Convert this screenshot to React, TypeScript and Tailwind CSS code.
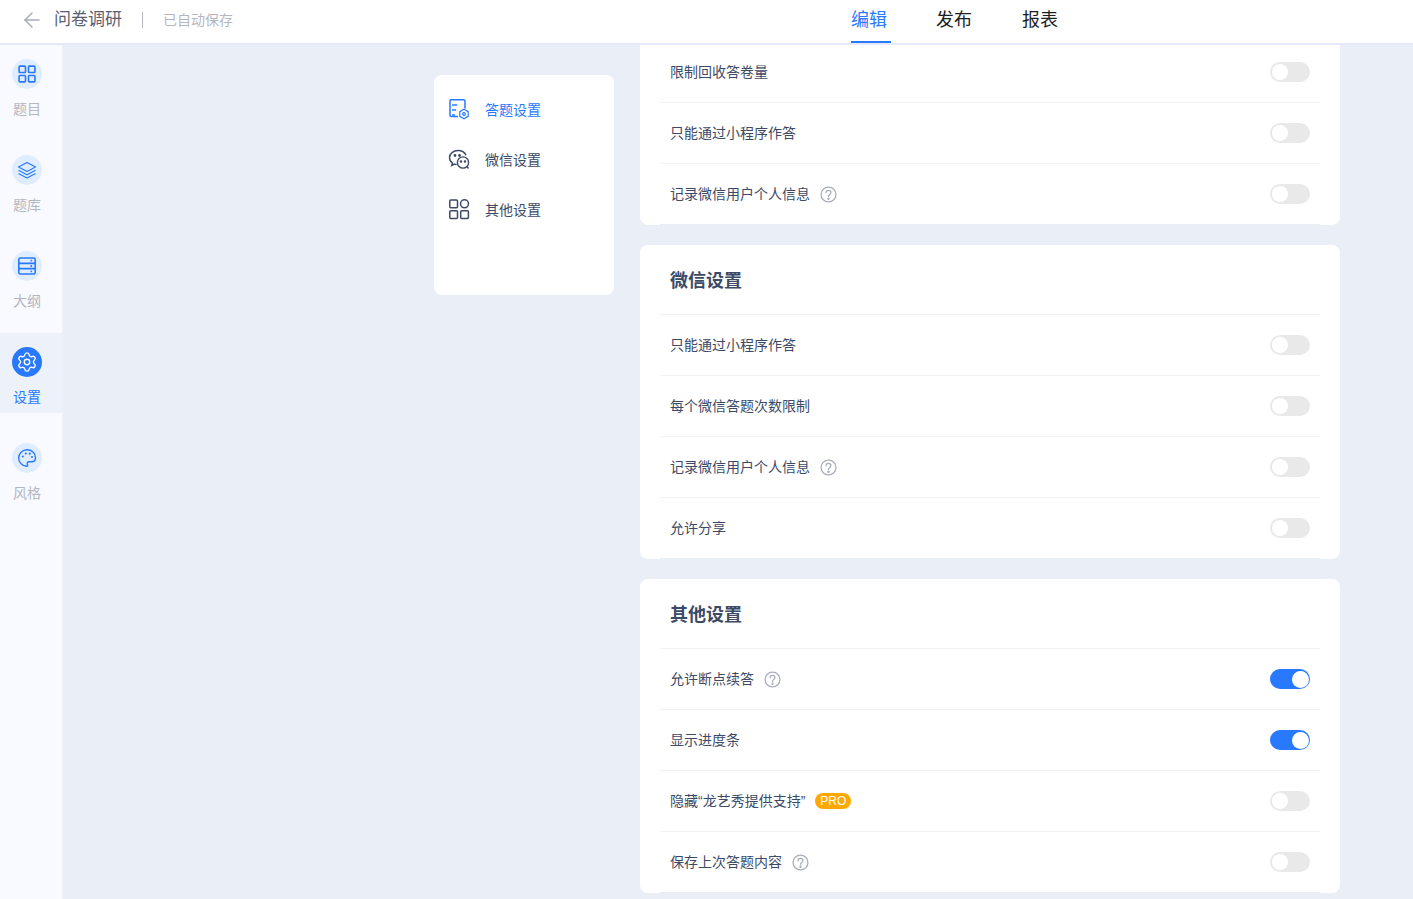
import { ArrowLeft, Settings } from 'lucide-react';
import type { ReactNode } from 'react';

function GridIcon() {
  return (
    <svg width="20" height="20" viewBox="0 0 20 20" fill="none" stroke="currentColor" strokeWidth="1.6">
      <rect x="2.100" y="2.100" width="6.400" height="6.400" rx=".8" />
      <rect x="11.500" y="2.100" width="6.400" height="6.400" rx=".8" />
      <rect x="2.100" y="11.500" width="6.400" height="6.400" rx=".8" />
      <rect x="11.500" y="11.500" width="6.400" height="6.400" rx=".8" />
    </svg>
  );
}

function LayersIcon() {
  return (
    <svg width="20" height="20" viewBox="0 0 20 20" fill="none" stroke="currentColor" strokeWidth="1.200" strokeLinejoin="round">
      <path d="M10 2.500l8.500 4.500-8.500 4.500-8.500-4.500z" />
      <path d="M1.500 10.300l8.500 4.500 8.500-4.500" />
      <path d="M1.500 13.500l8.500 4.500 8.500-4.500" />
    </svg>
  );
}

function OutlineIcon() {
  return (
    <svg width="20" height="20" viewBox="0 0 20 20" fill="none" stroke="currentColor" strokeWidth="1.600">
      <rect x="1.800" y="2" width="16.400" height="16" rx="1.500" />
      <path d="M2 7.400h16M2 12.600h16" />
      <path d="M13.500 4.700h2.500M13.500 10h2.500M13.500 15.300h2.500" strokeWidth="1.800" strokeDasharray="1.400 1" />
    </svg>
  );
}

function PaletteIcon() {
  return (
    <svg width="20" height="20" viewBox="0 0 20 20" fill="none" stroke="currentColor" strokeWidth="1.400">
      <path d="M10 1.800C5.300 1.800 1.700 5.500 1.700 10c0 4.500 3.600 8.300 8 8.300 1 0 1.100-.8.800-1.500-.7-1.500-.2-3 1.700-3h2.500c2 0 3.800-1.300 3.800-4C18.500 5 14.700 1.800 10 1.800z" />
      <circle cx="5.800" cy="8.500" r="1.100" fill="currentColor" stroke="none" />
      <circle cx="8.800" cy="5.500" r="1.100" fill="currentColor" stroke="none" />
      <circle cx="12.800" cy="5.700" r="1.100" fill="currentColor" stroke="none" />
      <circle cx="15" cy="9" r="1.100" fill="currentColor" stroke="none" />
    </svg>
  );
}

function HelpIcon() {
  return (
    <svg width="17" height="17" viewBox="0 0 18 18" fill="none" stroke="#a9adba" strokeWidth="1.300">
      <circle cx="9" cy="9" r="7.900" />
      <path d="M6.400 7.100c0-1.500 1.200-2.500 2.600-2.500s2.600 1 2.600 2.400c0 2-2.600 2-2.600 4.100" strokeLinecap="round" />
      <circle cx="9" cy="13.500" r=".6" fill="#a9adba" />
    </svg>
  );
}

function AnswerIcon() {
  return (
    <svg width="22" height="22" viewBox="0 0 22 22" fill="none" stroke="#2979ff" strokeWidth="1.500">
      <path d="M10 17.500H3A1.300 1.300 0 0 1 2 16.200V1.800A1.300 1.300 0 0 1 3 .8h12.700A1.300 1.300 0 0 1 17 1.800V9.500" />
      <path d="M4 6h5M4 11h4M4 16h3" />
      <path d="M16 10.300l4.200 2.300v4.800L16 19.700l-4.200-2.300v-4.800z" strokeWidth="1.200" />
      <circle cx="16" cy="15" r="1.300" strokeWidth="1.200" />
    </svg>
  );
}

function WechatIcon() {
  return (
    <svg width="22" height="22" viewBox="0 0 22 22" fill="none" stroke="#3d4a66" strokeWidth="1.400">
      <path d="M10 1.500C5.300 1.500 1.500 4.700 1.500 8.700c0 2.200 1.100 4.100 3 5.400l-.8 2.400 3-1.400c.7.200 1.300.3 2 .4" />
      <path d="M10 1.500c3.600 0 6.700 1.900 8 4.700" />
      <circle cx="15" cy="13.500" r="5.600" />
      <path d="M19 17.500l1.500 2" />
      <circle cx="7" cy="6.500" r=".7" fill="#3d4a66" />
      <circle cx="11.500" cy="6.500" r=".7" fill="#3d4a66" />
      <circle cx="13" cy="12.500" r=".6" fill="#3d4a66" />
      <circle cx="17" cy="12.500" r=".6" fill="#3d4a66" />
    </svg>
  );
}

function OtherIcon() {
  return (
    <svg width="22" height="22" viewBox="0 0 22 22" fill="none" stroke="#3d4a66" strokeWidth="1.500">
      <rect x="1.800" y="1" width="7.700" height="7.700" rx="1" />
      <circle cx="16.500" cy="4.800" r="4" />
      <rect x="1.800" y="11.800" width="7.700" height="7.700" rx="1" />
      <rect x="12.700" y="11.800" width="7.700" height="7.700" rx="1" />
    </svg>
  );
}

const navItems: { label: string; icon: ReactNode; active?: boolean }[] = [
  { label: '题目', icon: <GridIcon /> },
  { label: '题库', icon: <LayersIcon /> },
  { label: '大纲', icon: <OutlineIcon /> },
  { label: '设置', icon: <Settings size={22} strokeWidth={1.500} />, active: true },
  { label: '风格', icon: <PaletteIcon /> },
];

function Toggle({ on }: { on?: boolean }) {
  return on ? (
    <div className="flex h-5 w-10 items-center justify-end rounded-full bg-[#2979ff] px-px">
      <div className="h-[17px] w-[17px] rounded-full bg-white" />
    </div>
  ) : (
    <div className="flex h-5 w-10 items-center rounded-full bg-[#e9e9e9] px-[2px]">
      <div className="h-4 w-4 rounded-full bg-white" />
    </div>
  );
}

function Row({ label, help, pro, on, last }: { label: string; help?: boolean; pro?: boolean; on?: boolean; last?: boolean }) {
  return (
    <div className={`flex h-[61px] items-center justify-between border-b px-[10px] ${last ? 'border-[#eaeef7]' : 'border-[#f0f1f5]'}`}>
      <div className="flex items-center text-sm text-[#3d4a66]">
        <span>{label}</span>
        {help && (
          <span className="ml-[10px] flex">
            <HelpIcon />
          </span>
        )}
        {pro && (
          <span className="ml-[10px] flex h-4 w-9 items-center justify-center rounded-full bg-[#ffa800] text-xs text-white">
            PRO
          </span>
        )}
      </div>
      <Toggle on={on} />
    </div>
  );
}

function Title({ children }: { children: ReactNode }) {
  return (
    <div className="flex h-[70px] items-center border-b border-[#f0f1f5] px-[10px] pt-[2px] text-lg font-bold text-[#3d4a66]">
      {children}
    </div>
  );
}

export default function App() {
  return (
    <div className="flex h-screen flex-col overflow-hidden bg-[#eaeef7] font-['Liberation_Sans','Noto_Sans_CJK_SC',sans-serif]">
      <header className="flex h-[45px] shrink-0 items-center border-b-2 border-[#e6e9fb] bg-white">
        <div className="flex w-[851px] shrink-0 items-center pb-1 pl-[20px]">
          <ArrowLeft size={24} strokeWidth={1.500} className="text-[#a9adb8]" />
          <span className="ml-[10px] text-[17px] text-[#5b6070]">问卷调研</span>
          <div className="ml-[20px] h-4 w-px bg-[#b5b8c0]" />
          <span className="ml-[20px] mt-px text-sm text-[#b4b7bf]">已自动保存</span>
        </div>
        <nav className="flex h-[43px] text-lg text-[#1c1f26]">
          <div className="flex h-[43px] w-10 items-center border-b-2 border-[#2979ff] pb-px text-[#2979ff]">编辑</div>
          <div className="ml-[45px] flex h-[43px] w-10 items-center pb-[3px]">发布</div>
          <div className="ml-[46px] flex h-[43px] w-10 items-center pb-[3px]">报表</div>
        </nav>
      </header>

      <div className="flex min-h-0 flex-1">
        <aside className="flex w-[63px] shrink-0 flex-col gap-4 border-r border-[#eef1f8] bg-[#f8faff]">
          {navItems.map((item) => (
            <div
              key={item.label}
              className={`flex h-20 flex-col items-center pt-[14px] pr-2 ${item.active ? 'bg-[#ecf1fa]' : ''}`}
            >
              <div
                className={`flex h-[30px] w-[30px] items-center justify-center rounded-full ${
                  item.active ? 'bg-[#2979ff] text-white' : 'bg-[#e0edff] text-[#2979ff]'
                }`}
              >
                {item.icon}
              </div>
              <span className={`mt-[10px] text-sm leading-[20px] ${item.active ? 'text-[#2979ff]' : 'text-[#b4b7bf]'}`}>
                {item.label}
              </span>
            </div>
          ))}
        </aside>

        <main className="flex min-w-0 flex-1 items-start gap-[26px] overflow-hidden pl-[371px]">
          <div className="mt-[30px] h-[220px] w-[180px] shrink-0 rounded-lg bg-white px-[14px] pt-[10px]">
            <div className="flex h-[50px] items-center gap-[15px] text-sm text-[#2979ff]">
              <AnswerIcon />
              <span>答题设置</span>
            </div>
            <div className="flex h-[50px] items-center gap-[15px] text-sm text-[#3d4a66]">
              <WechatIcon />
              <span>微信设置</span>
            </div>
            <div className="flex h-[50px] items-center gap-[15px] text-sm text-[#3d4a66]">
              <OtherIcon />
              <span>其他设置</span>
            </div>
          </div>

          <div className="-mt-[3px] flex w-[700px] shrink-0 flex-col gap-5">
            <section className="rounded-b-lg bg-white px-5">
              <Row label="限制回收答卷量" />
              <Row label="只能通过小程序作答" />
              <Row label="记录微信用户个人信息" help last />
            </section>
            <section className="rounded-lg bg-white px-5">
              <Title>微信设置</Title>
              <Row label="只能通过小程序作答" />
              <Row label="每个微信答题次数限制" />
              <Row label="记录微信用户个人信息" help />
              <Row label="允许分享" last />
            </section>
            <section className="rounded-lg bg-white px-5">
              <Title>其他设置</Title>
              <Row label="允许断点续答" help on />
              <Row label="显示进度条" on />
              <Row label="隐藏“龙艺秀提供支持”" pro />
              <Row label="保存上次答题内容" help last />
            </section>
          </div>
        </main>
      </div>
    </div>
  );
}
